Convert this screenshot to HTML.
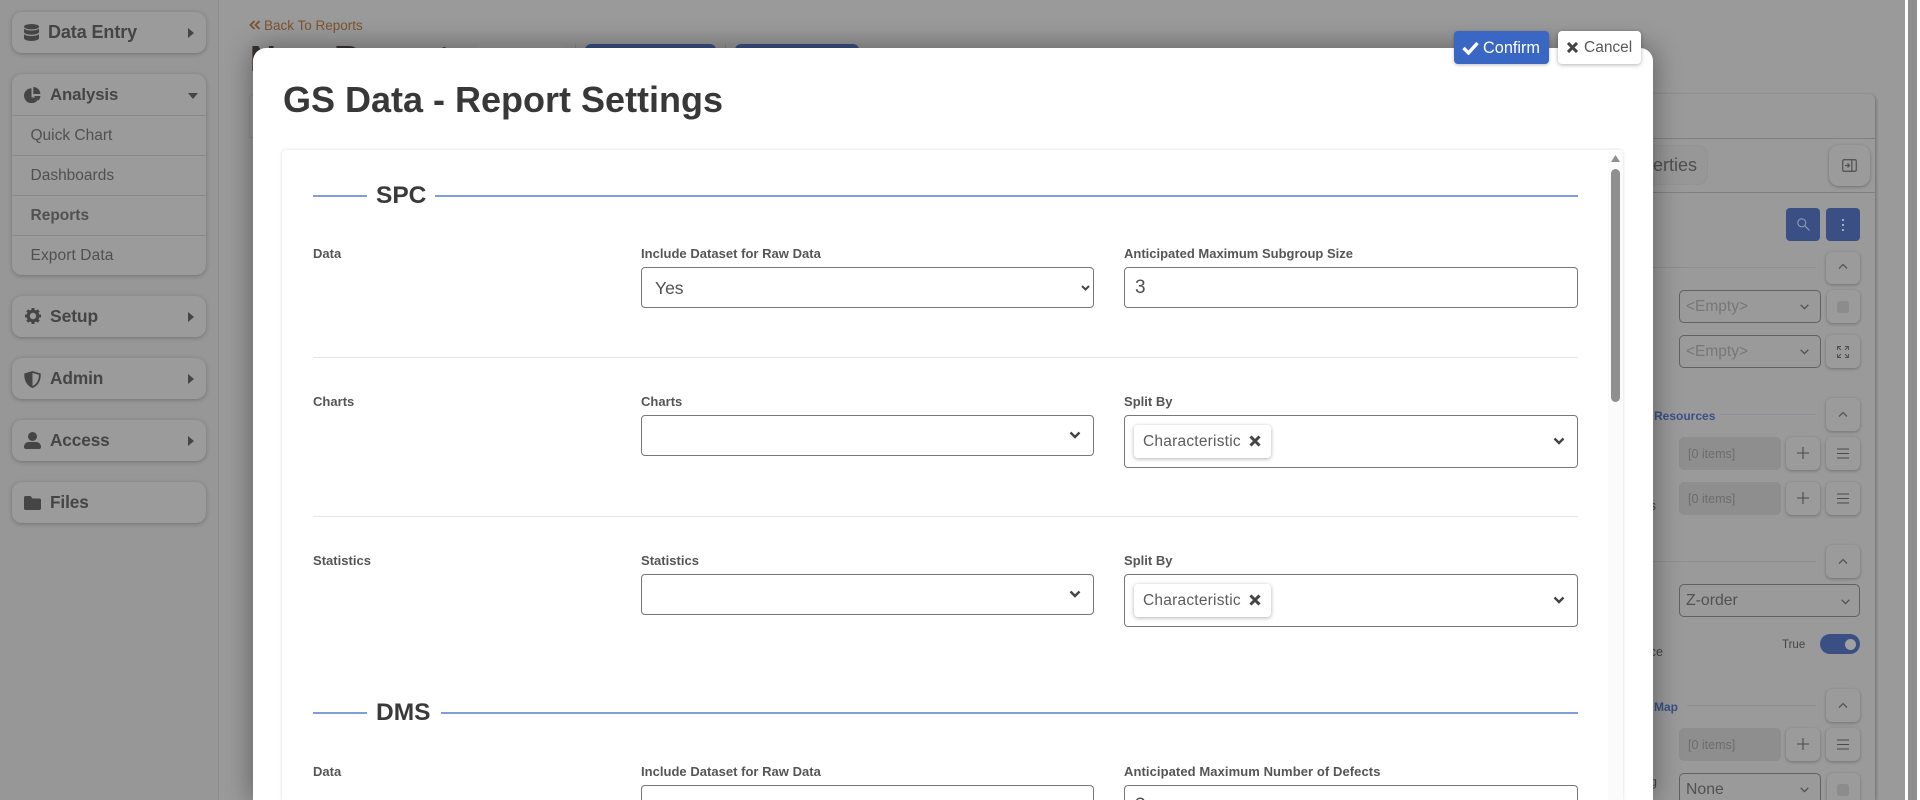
<!DOCTYPE html>
<html lang="en"><head><meta charset="utf-8"><title>GS Data - Report Settings</title>
<style>
html,body{margin:0;padding:0;width:1920px;height:800px;overflow:hidden;background:#fff}
body{font-family:"Liberation Sans",sans-serif;position:relative}
div,span.a,svg{position:absolute}
#root{left:0;top:0;width:1920px;height:800px;overflow:hidden}
.t{white-space:nowrap;line-height:20px;height:20px}
.card{left:12px;width:194px;background:#9b9b9b;border-radius:10px;box-shadow:0 1px 4px rgba(0,0,0,.25)}
.h{font-size:17px;font-weight:bold;color:#454545;letter-spacing:-.1px}
.i{font-size:15.5px;color:#505050;left:30.5px}
.d{left:12px;width:194px;height:1px;background:#8a8a8a}
.b{background:#9b9b9b;border-radius:6px;box-shadow:0 1px 3px rgba(0,0,0,.28)}
.sel{border:1px solid #616161;border-radius:5px;box-sizing:border-box;color:#5a5a5a;font-size:17px;padding-left:6px}
.items{background:#8e8e8e;border-radius:5px;left:1679px;width:102px;height:33px;color:#6c6c6c;font-size:12.5px;line-height:35px;text-indent:9px}
.lab{font-size:13px;font-weight:bold;color:#555;letter-spacing:.02px}
.f{background:#fff;border:1px solid #777;border-radius:4px;box-sizing:border-box}
.sec{font-size:24.5px;font-weight:bold;color:#3a3a3a;line-height:28px;height:28px;letter-spacing:0}
.bl{height:2px;background:#7f9edb}
.hr{left:313px;width:1265px;height:1px;background:#e6e6e6}
.pill{background:#fff;border-radius:4px;box-shadow:0 1px 4px rgba(0,0,0,.3);left:1134px;width:137px;height:33px;font-size:15.5px;color:#5c5c5c;line-height:34px;text-indent:9px;letter-spacing:.22px;white-space:nowrap}
</style></head><body><div id="root">
<div style="left:0;top:0;width:1905px;height:800px;background:#9a9a9a"></div>
<div style="left:0;top:0;width:218px;height:800px;background:#979797"></div>
<div style="left:218px;top:0;width:1px;height:800px;background:#8c8c8c"></div>
<div style="left:1905px;top:0;width:15px;height:800px;background:#fff"></div>
<div style="left:1908px;top:0;width:9px;height:800px;background:#8e8e8e"></div>

<!-- sidebar -->
<div class="card" style="top:12px;height:41px"></div>
<svg style="left:24px;top:24px" width="15" height="17" viewBox="0 0 15 17" fill="#454545"><ellipse cx="7.5" cy="2.7" rx="7.5" ry="2.7"/><path d="M0 4.6c1.5 1.4 4.4 1.9 7.5 1.9S13.500 6 15 4.600V8c0 1.500-3.400 2.700-7.500 2.700S0 9.500 0 8zM0 10.100c1.500 1.400 4.400 1.900 7.500 1.900s6-.5 7.500-1.900v4.200c0 1.500-3.400 2.700-7.500 2.700S0 15.800 0 14.300z"/></svg>
<div class="t h" style="left:48px;top:22px;font-size:18px">Data Entry</div>
<svg style="left:188px;top:28px" width="6" height="10" viewBox="0 0 6 10" fill="#454545"><path d="M0 0l6 5-6 5z"/></svg>

<div class="card" style="top:74px;height:201px"></div>
<svg style="left:24px;top:87px" width="17" height="16" viewBox="0 0 17 16" fill="#454545"><path d="M7.500 1.200A7.500 7.500 0 1 0 14.800 10.500H7.500z"/><path d="M9.300 0a7 7 0 0 1 7 7H9.300z"/><path d="M10 9h6.500a7 7 0 0 1-2.200 4.500z"/></svg>
<div class="t h" style="left:50px;top:85px;font-size:16.8px">Analysis</div>
<svg style="left:188px;top:93px" width="10" height="6" viewBox="0 0 10 6" fill="#454545"><path d="M0 0h10L5 6z"/></svg>
<div class="d" style="top:115px"></div><div class="d" style="top:155px"></div><div class="d" style="top:195px"></div><div class="d" style="top:235px"></div>
<div class="t i" style="top:126px">Quick Chart</div>
<div class="t i" style="top:166px">Dashboards</div>
<div class="t i" style="top:206px;font-weight:bold">Reports</div>
<div class="t i" style="top:246px;letter-spacing:.1px">Export Data</div>

<div class="card" style="top:296px;height:41px"></div>
<svg style="left:25px;top:308px" width="16" height="16" viewBox="0 0 16 16"><circle cx="8" cy="8" r="4.800" fill="none" stroke="#454545" stroke-width="3.200"/><path d="M8 0v3M8 13v3M0 8h3M13 8h3M2.300 2.300l2.100 2.100M11.600 11.600l2.100 2.100M2.300 13.700l2.100-2.100M11.600 4.400l2.100-2.100" stroke="#454545" stroke-width="3"/></svg>
<div class="t h" style="left:50px;top:306px;font-size:17.500px">Setup</div>
<svg style="left:188px;top:312px" width="6" height="10" viewBox="0 0 6 10" fill="#454545"><path d="M0 0l6 5-6 5z"/></svg>

<div class="card" style="top:358px;height:41px"></div>
<svg style="left:24px;top:371px" width="17" height="17" viewBox="0 0 17 17"><path d="M8.500 1L15.800 3.200C16 9 13.500 14 8.500 16 3.500 14 1 9 1.200 3.200z" fill="none" stroke="#454545" stroke-width="1.800"/><path d="M8.500 1L1.200 3.200C1 9 3.500 14 8.500 16z" fill="#454545"/></svg>
<div class="t h" style="left:50px;top:368px;font-size:17.300px">Admin</div>
<svg style="left:188px;top:374px" width="6" height="10" viewBox="0 0 6 10" fill="#454545"><path d="M0 0l6 5-6 5z"/></svg>

<div class="card" style="top:420px;height:41px"></div>
<svg style="left:24px;top:432px" width="17" height="17" viewBox="0 0 17 17" fill="#454545"><circle cx="8.500" cy="4.500" r="4.500"/><path d="M0 15c0-3 2.200-5 5-5h7c2.800 0 5 2 5 5 0 1.200-.8 2-2 2H2c-1.200 0-2-.8-2-2z"/></svg>
<div class="t h" style="left:50px;top:430px;font-size:17.200px">Access</div>
<svg style="left:188px;top:436px" width="6" height="10" viewBox="0 0 6 10" fill="#454545"><path d="M0 0l6 5-6 5z"/></svg>

<div class="card" style="top:482px;height:41px"></div>
<svg style="left:24px;top:496px" width="17" height="14" viewBox="0 0 17 14" fill="#454545"><path d="M1.500 0h5l2 2.500h7c.8 0 1.500.7 1.500 1.500v8.500c0 .8-.7 1.500-1.500 1.500h-14C.7 14 0 13.300 0 12.500v-11C0 .7.700 0 1.500 0z"/></svg>
<div class="t h" style="left:50px;top:492px;font-size:17.200px">Files</div>

<!-- behind modal -->
<svg style="left:249px;top:20px" width="12" height="10" viewBox="0 0 12 10" fill="none" stroke="#7d5330" stroke-width="1.800"><path d="M5.500 1L1.500 5l4 4M10.500 1l-4 4 4 4"/></svg>
<div class="t" style="left:264px;top:16px;font-size:13.500px;color:#7d5330">Back To Reports</div>
<div class="t" style="left:250px;top:37px;height:44px;line-height:44px;font-size:36px;font-weight:bold;color:#3a3330">New Report</div>
<div style="left:476px;top:44px;width:90px;height:6px;background:#9d9d9d;border-radius:6px 6px 0 0"></div>
<div style="left:585px;top:44px;width:131px;height:6px;background:#3a5085;border-radius:6px 6px 0 0"></div>
<div style="left:735px;top:44px;width:124px;height:6px;background:#3a5085;border-radius:6px 6px 0 0"></div>
<div style="left:575px;top:44px;width:1px;height:6px;background:#8a8a8a"></div><div style="left:725px;top:44px;width:1px;height:6px;background:#8a8a8a"></div>
<div style="left:249px;top:93px;width:8px;height:45px;border:1px solid #8e8e8e;border-right:0;border-radius:6px 0 0 0;box-sizing:border-box"></div>

<!-- right panel -->
<div style="left:1640px;top:94px;width:235px;height:706px;border-radius:0 6px 0 0;background:#9a9a9a;box-shadow:1px 1px 3px rgba(0,0,0,.3)"></div>
<div style="left:1640px;top:138px;width:235px;height:1px;background:#808080"></div>
<div style="left:1640px;top:192px;width:235px;height:1px;background:#808080"></div>
<div style="left:1640px;top:145px;width:68px;height:40px;background:#979797;border-radius:10px;border:1px solid #939393;box-sizing:border-box"></div>
<div class="t" style="left:1653px;top:155px;font-size:18px;color:#4f4f4f;width:44px;overflow:hidden;direction:rtl">erties</div>
<div class="b" style="left:1829px;top:145px;width:41px;height:41px;border-radius:10px"></div>
<svg style="left:1842px;top:159px" width="15" height="13" viewBox="0 0 15 13" fill="none" stroke="#555" stroke-width="1.300"><rect x=".7" y=".7" width="13.600" height="11.600" rx="1.500"/><path d="M9.800.7v11.600M3 6.500h4.500M5.500 4.500l2 2-2 2"/></svg>
<div style="left:1786px;top:208px;width:34px;height:33px;background:#3a5085;border-radius:4px"></div>
<svg style="left:1797px;top:218px" width="13" height="13" viewBox="0 0 13 13" fill="none" stroke="#8e9ab8" stroke-width="1.100"><circle cx="4.800" cy="4.800" r="4"/><path d="M7.800 7.800l4.700 4.700"/></svg>
<div style="left:1826px;top:208px;width:34px;height:33px;background:#3a5085;border-radius:4px"></div>
<svg style="left:1841px;top:219px" width="4" height="12" viewBox="0 0 4 12" fill="#a4adc4"><rect x="1" y="0" width="2" height="2"/><rect x="1" y="5" width="2" height="2"/><rect x="1" y="10" width="2" height="2"/></svg>

<div style="left:1653px;top:267px;width:163px;height:1px;background:#8f8f8f"></div>
<div class="b" style="left:1826px;top:252px;width:34px;height:32px"></div>
<svg style="left:1838px;top:263px" width="10" height="7" viewBox="0 0 10 7" fill="none" stroke="#555" stroke-width="1.300"><path d="M1 5.500l4-4 4 4"/></svg>
<div class="sel t" style="left:1679px;top:290px;width:142px;height:33px;line-height:32px;color:#777;font-size:15.500px">&lt;Empty&gt;</div>
<svg style="left:1800px;top:304px" width="9" height="6" viewBox="0 0 9 6" fill="none" stroke="#4f4f4f" stroke-width="1.300"><path d="M.7.800l3.800 3.800L8.300.8"/></svg>
<div class="b" style="left:1827px;top:290px;width:33px;height:33px"></div>
<div style="left:1837px;top:301px;width:12px;height:12px;background:#8c8c8c;border-radius:3px"></div>
<div class="sel t" style="left:1679px;top:335px;width:142px;height:33px;line-height:32px;color:#777;font-size:15.500px">&lt;Empty&gt;</div>
<svg style="left:1800px;top:349px" width="9" height="6" viewBox="0 0 9 6" fill="none" stroke="#4f4f4f" stroke-width="1.300"><path d="M.7.800l3.800 3.800L8.300.8"/></svg>
<div class="b" style="left:1826px;top:335px;width:34px;height:33px"></div>
<svg style="left:1837px;top:346px" width="12" height="12" viewBox="0 0 12 12" fill="none" stroke="#4f4f4f" stroke-width=".9"><path d="M.5 4V.5H4M8 .5h3.500V4M.5 8v3.500H4M8 11.500h3.500V8M.5.500l3.500 3.500M11.500.5L8 4M.5 11.500L4 8M11.500 11.500L8 8"/></svg>

<div class="t" style="left:1654px;top:406px;font-size:12px;font-weight:bold;color:#3a5085">Resources</div>
<div style="left:1720px;top:414px;width:96px;height:1px;background:#8f8f9c"></div>
<div class="b" style="left:1826px;top:398px;width:34px;height:33px"></div>
<svg style="left:1838px;top:411px" width="10" height="7" viewBox="0 0 10 7" fill="none" stroke="#555" stroke-width="1.300"><path d="M1 5.500l4-4 4 4"/></svg>

<div class="items" style="top:437px">[0 items]</div>
<div class="b" style="left:1786px;top:437px;width:34px;height:33px"></div>
<svg style="left:1797px;top:447px" width="12" height="12" stroke="#4a4a4a" stroke-width="1.100"><path d="M6 0v12M0 6h12"/></svg>
<div class="b" style="left:1826px;top:437px;width:34px;height:33px"></div>
<svg style="left:1837px;top:448px" width="12" height="11" stroke="#4a4a4a" stroke-width="1.100"><path d="M0 1h12M0 5.500h12M0 10h12"/></svg>
<div class="items" style="top:482px">[0 items]</div>
<div class="b" style="left:1786px;top:482px;width:34px;height:33px"></div>
<svg style="left:1797px;top:492px" width="12" height="12" stroke="#4a4a4a" stroke-width="1.100"><path d="M6 0v12M0 6h12"/></svg>
<div class="b" style="left:1826px;top:482px;width:34px;height:33px"></div>
<svg style="left:1837px;top:493px" width="12" height="11" stroke="#4a4a4a" stroke-width="1.100"><path d="M0 1h12M0 5.500h12M0 10h12"/></svg>
<div class="t" style="left:1620px;top:496px;font-size:12.500px;color:#444;width:36px;text-align:right">s</div>

<div style="left:1653px;top:561px;width:163px;height:1px;background:#8f8f8f"></div>
<div class="b" style="left:1826px;top:545px;width:34px;height:33px"></div>
<svg style="left:1838px;top:558px" width="10" height="7" viewBox="0 0 10 7" fill="none" stroke="#555" stroke-width="1.300"><path d="M1 5.500l4-4 4 4"/></svg>
<div class="sel t" style="left:1679px;top:584px;width:181px;height:33px;line-height:31px;font-size:15.800px;color:#515151">Z-order</div>
<svg style="left:1841px;top:599px" width="9" height="6" viewBox="0 0 9 6" fill="none" stroke="#4f4f4f" stroke-width="1.300"><path d="M.7.800l3.800 3.800L8.300.8"/></svg>
<div class="t" style="left:1782px;top:635px;font-size:11.500px;color:#444">True</div>
<div style="left:1820px;top:634px;width:40px;height:20px;border-radius:10px;background:#3a5085"></div>
<div style="left:1845px;top:639px;width:11px;height:11px;border-radius:50%;background:#a0a0a0"></div>
<div class="t" style="left:1610px;top:642px;font-size:12.500px;color:#444;width:53px;text-align:right">ce</div>

<div class="t" style="left:1654px;top:697px;font-size:12px;font-weight:bold;color:#3a5085">Map</div>
<div style="left:1687px;top:705px;width:129px;height:1px;background:#8f8f8f"></div>
<div class="b" style="left:1826px;top:689px;width:34px;height:33px"></div>
<svg style="left:1838px;top:702px" width="10" height="7" viewBox="0 0 10 7" fill="none" stroke="#555" stroke-width="1.300"><path d="M1 5.500l4-4 4 4"/></svg>
<div class="items" style="top:728px">[0 items]</div>
<div class="b" style="left:1786px;top:728px;width:34px;height:33px"></div>
<svg style="left:1797px;top:738px" width="12" height="12" stroke="#4a4a4a" stroke-width="1.100"><path d="M6 0v12M0 6h12"/></svg>
<div class="b" style="left:1826px;top:728px;width:34px;height:33px"></div>
<svg style="left:1837px;top:739px" width="12" height="11" stroke="#4a4a4a" stroke-width="1.100"><path d="M0 1h12M0 5.500h12M0 10h12"/></svg>
<div class="sel t" style="left:1679px;top:773px;width:142px;height:27px;border-bottom:0;border-radius:5px 5px 0 0;line-height:31px;font-size:15.800px;color:#515151">None</div>
<svg style="left:1800px;top:787px" width="9" height="6" viewBox="0 0 9 6" fill="none" stroke="#4f4f4f" stroke-width="1.300"><path d="M.7.800l3.800 3.800L8.300.8"/></svg>
<div class="b" style="left:1827px;top:773px;width:33px;height:27px;border-radius:6px 6px 0 0"></div>
<div style="left:1837px;top:784px;width:12px;height:12px;background:#8c8c8c;border-radius:3px"></div>
<div class="t" style="left:1620px;top:772px;font-size:12.500px;color:#444;width:37px;text-align:right">g</div>

<!-- modal -->
<div style="left:253px;top:48px;width:1400px;height:752px;background:#fff;border-radius:13px 13px 0 0;box-shadow:0 0 26px 2px rgba(0,0,0,.36)"></div>
<div style="left:1454px;top:31px;width:95px;height:33px;background:#3a66c4;border-radius:4px;box-shadow:0 1px 3px rgba(0,0,0,.25)"></div>
<svg style="left:1462px;top:41px" width="17" height="14" viewBox="0 0 17 14" fill="none" stroke="#fff" stroke-width="3.400"><path d="M1.500 7l5 5L15.500 2"/></svg>
<div class="t" style="left:1483px;top:38px;font-size:16.300px;color:#fff">Confirm</div>
<div style="left:1558px;top:31px;width:83px;height:33px;background:#fff;border-radius:4px;box-shadow:0 1px 4px rgba(0,0,0,.3)"></div>
<svg style="left:1567px;top:42px" width="11" height="11" viewBox="0 0 11 11" stroke="#444" stroke-width="3"><path d="M1 1l9 9M10 1L1 10"/></svg>
<div class="t" style="left:1584px;top:38px;font-size:15.500px;color:#595959">Cancel</div>

<div class="t" style="left:283px;top:78px;height:44px;line-height:44px;font-size:36px;font-weight:bold;color:#383838;letter-spacing:0">GS Data - Report Settings</div>

<!-- inner panel -->
<div style="left:282px;top:150px;width:1341px;height:650px;background:#fff;border-radius:4px 4px 0 0;box-shadow:0 0 3px rgba(0,0,0,.16)"></div>
<div style="left:1608px;top:151px;width:15px;height:649px;background:#fbfbfb"></div>
<svg style="left:1611px;top:155px" width="9" height="8" fill="#8f8f8f"><path d="M4.500 0L9 7H0z"/></svg>
<div style="left:1611px;top:169px;width:9px;height:233px;background:#8f8f8f;border-radius:5px"></div>

<div class="bl" style="left:313px;top:195px;width:54px"></div>
<div class="t sec" style="left:376px;top:181.500px">SPC</div>
<div class="bl" style="left:435px;top:195px;width:1143px"></div>

<div class="t lab" style="left:313px;top:243.500px">Data</div>
<div class="t lab" style="left:641px;top:243.500px;letter-spacing:.025px">Include Dataset for Raw Data</div>
<div class="t lab" style="left:1124px;top:243.500px;letter-spacing:0">Anticipated Maximum Subgroup Size</div>
<div class="f t" style="left:641px;top:267px;width:453px;height:41px;line-height:41px;font-size:17.500px;color:#505050;padding-left:13px">Yes</div>
<svg style="left:1081px;top:285px" width="9" height="7" viewBox="0 0 9 7" fill="none" stroke="#444" stroke-width="2"><path d="M1 1l3.500 3.500L8 1"/></svg>
<div class="f t" style="left:1124px;top:267px;width:454px;height:41px;line-height:40px;font-size:19px;color:#505050;padding-left:10px">3</div>

<div class="hr" style="top:357px"></div>

<div class="t lab" style="left:313px;top:391.500px">Charts</div>
<div class="t lab" style="left:641px;top:391.500px">Charts</div>
<div class="t lab" style="left:1124px;top:391.500px">Split By</div>
<div class="f" style="left:641px;top:415px;width:453px;height:41px"></div>
<svg style="left:1069px;top:431px" width="12" height="8" viewBox="0 0 12 8" fill="none" stroke="#444" stroke-width="2.400"><path d="M1.500 1.500L6 6l4.500-4.500"/></svg>
<div class="f" style="left:1124px;top:415px;width:454px;height:53px"></div>
<div class="pill" style="top:425px">Characteristic</div>
<svg style="left:1249px;top:435px" width="12" height="12" viewBox="0 0 12 12" stroke="#444" stroke-width="3"><path d="M1.500 1.500l9 9M10.500 1.500l-9 9"/></svg>
<svg style="left:1553px;top:437px" width="12" height="8" viewBox="0 0 12 8" fill="none" stroke="#444" stroke-width="2.400"><path d="M1.500 1.500L6 6l4.500-4.500"/></svg>

<div class="hr" style="top:516px"></div>

<div class="t lab" style="left:313px;top:550.500px">Statistics</div>
<div class="t lab" style="left:641px;top:550.500px">Statistics</div>
<div class="t lab" style="left:1124px;top:550.500px">Split By</div>
<div class="f" style="left:641px;top:574px;width:453px;height:41px"></div>
<svg style="left:1069px;top:590px" width="12" height="8" viewBox="0 0 12 8" fill="none" stroke="#444" stroke-width="2.400"><path d="M1.500 1.500L6 6l4.500-4.500"/></svg>
<div class="f" style="left:1124px;top:574px;width:454px;height:53px"></div>
<div class="pill" style="top:584px">Characteristic</div>
<svg style="left:1249px;top:594px" width="12" height="12" viewBox="0 0 12 12" stroke="#444" stroke-width="3"><path d="M1.500 1.500l9 9M10.500 1.500l-9 9"/></svg>
<svg style="left:1553px;top:596px" width="12" height="8" viewBox="0 0 12 8" fill="none" stroke="#444" stroke-width="2.400"><path d="M1.500 1.500L6 6l4.500-4.500"/></svg>

<div class="bl" style="left:313px;top:712px;width:54px"></div>
<div class="t sec" style="left:376px;top:699px">DMS</div>
<div class="bl" style="left:441px;top:712px;width:1137px"></div>

<div class="t lab" style="left:313px;top:762px">Data</div>
<div class="t lab" style="left:641px;top:762px;letter-spacing:.025px">Include Dataset for Raw Data</div>
<div class="t lab" style="left:1124px;top:762px;letter-spacing:.08px">Anticipated Maximum Number of Defects</div>
<div class="f t" style="left:641px;top:785px;width:453px;height:15px;border-bottom:0;border-radius:4px 4px 0 0;line-height:41px;font-size:17.500px;color:#505050;padding-left:13px;overflow:hidden">Yes</div>
<div class="f t" style="left:1124px;top:785px;width:454px;height:15px;border-bottom:0;border-radius:4px 4px 0 0;line-height:40px;font-size:19px;color:#505050;padding-left:10px;overflow:hidden">3</div>
</div></body></html>
